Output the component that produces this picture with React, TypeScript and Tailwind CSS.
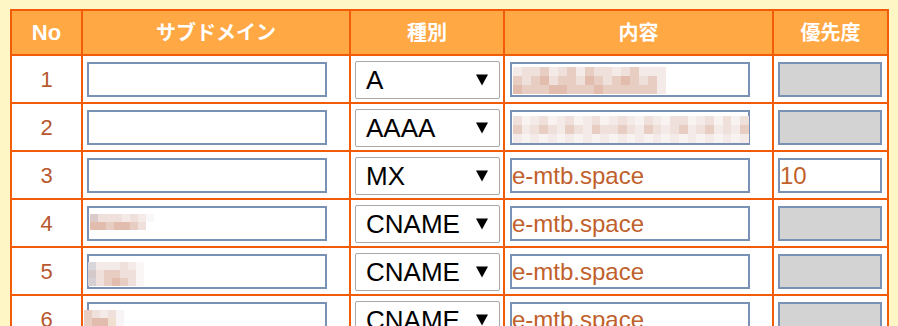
import React from "react";

const FONT = { fontFamily: '"Liberation Sans", Arial, "Noto Sans CJK JP", sans-serif' };

type Row = {
  no: number;
  sub?: string[][];
  subOffset?: number;
  type: string;
  content?: string;
  contentMosaic?: string[][];
  mosaicTop?: number;
  priority?: string;
};

const P1 = "#efe0dc";
const P2 = "#e8cdc3";
const P3 = "#e2bcad";
const P4 = "#f4ebe8";
const P5 = "#dcc9c9";
const W = "#f8f2f0";

const rows: Row[] = [
  {
    no: 1,
    type: "A",
    contentMosaic: [
      [P4, P1, P1, P2, P4, P1, P2, P4, P2, P1, P1, P4, P1, P2, P4, P4, P4],
      [P2, P1, P2, P3, P1, P2, P2, P1, P3, P2, P1, P2, P3, P2, P1, P2, P4],
      [P3, P2, P2, P2, P3, P3, P2, P2, P2, P3, P2, P2, P2, P2, P2, P2, P4],
    ],
    mosaicTop: 3,
  },
  {
    no: 2,
    type: "AAAA",
    contentMosaic: [
      [P1, W, P4, P1, W, P4, P1, W, P4, P1, W, P4, P1, P4, W, P1, P4, W, P1, P1, W, P4, P1, W, P1, W, P1],
      [P2, P4, P1, P2, P1, P4, P2, P1, P4, P2, P1, P1, P2, P1, P4, P2, P1, P4, P1, P2, P4, P1, P2, P4, P1, P4, P2],
      [P4, W, P4, W, P4, W, P4, W, P4, W, P4, W, P4, W, P4, W, P4, W, P4, W, P4, W, P4, W, P4, W, P4],
    ],
    mosaicTop: 4,
  },
  { no: 3, type: "MX", content: "e-mtb.space", priority: "10" },
  {
    no: 4,
    type: "CNAME",
    content: "e-mtb.space",
    sub: [
      [P5, P1, P1, P1, P4, P1, P4, "#faf7f8"],
      [P3, P3, P2, P3, P3, P2, P1, "#ffffff"],
    ],
    subOffset: 1,
  },
  {
    no: 5,
    type: "CNAME",
    content: "e-mtb.space",
    sub: [
      ["#d9d6db", P4, P4, P4, P1, P4, "#faf6f5"],
      ["#d4cacc", P1, P2, P2, P1, P1, "#faf6f5"],
      ["#d6cfd3", P1, P2, P3, P2, P1, "#faf6f5"],
    ],
    subOffset: -1,
  },
  {
    no: 6,
    type: "CNAME",
    content: "e-mtb.space",
    sub: [
      [P2, P1, P4, P1, "#f8f4f6"],
      [P2, P3, P3, "#f0e0d0", "#f8f4f6"],
    ],
    subOffset: -5,
  },
];

function Mosaic({ grid, size = 8 }: { grid: string[][]; size?: number }) {
  return (
    <div className="flex flex-col">
      {grid.map((r, i) => (
        <div key={i} className="flex">
          {r.map((c, j) => (
            <div key={j} style={{ width: size, height: size, background: c }} />
          ))}
        </div>
      ))}
    </div>
  );
}

function TextBox({
  width,
  value,
  disabled,
  children,
}: {
  width: string;
  value?: string;
  disabled?: boolean;
  children?: React.ReactNode;
}) {
  return (
    <div
      className={`${width} relative h-[35px] border-2 border-[#7891b4] ${
        disabled ? "bg-[#d3d3d3]" : "bg-white"
      } flex items-center`}
    >
      {value && (
        <span className="text-[24px] leading-[30px] text-[#c0612c] whitespace-nowrap">
          {value}
        </span>
      )}
      {children}
    </div>
  );
}

export default function App() {
  const headers = ["No", "サブドメイン", "種別", "内容", "優先度"];
  return (
    <div className="h-[326px] w-full overflow-hidden bg-[#fff6c6] pl-[10px] pt-[9px]" style={FONT}>
      <div className="grid w-[879px] grid-cols-[69px_266px_152px_267px_113px] gap-[2px] bg-[#f25b07] p-[2px]">
        {headers.map((h) => (
          <div
            key={h}
            className={`flex h-[43px] items-center justify-center bg-[#ffa844] font-bold text-white ${
              h === "No" ? "text-[22px]" : "text-[20px]"
            }`}
          >
            {h}
          </div>
        ))}
        {rows.map((r) => (
          <React.Fragment key={r.no}>
            <div className="flex h-[46px] items-center justify-center bg-white text-[22px] text-[#b8582e]">
              {r.no}
            </div>
            <div className="flex h-[46px] items-start bg-white pl-[4px] pt-[6px]">
              <TextBox width="w-[240px]">
                {r.sub && (
                  <div className="absolute top-[6px]" style={{ left: r.subOffset ?? 0 }}>
                    <Mosaic grid={r.sub} />
                  </div>
                )}
              </TextBox>
            </div>
            <div className="flex h-[46px] items-start bg-white pl-[4px] pt-[5px]">
              <div className="flex h-[38px] w-[145px] items-center justify-between rounded-[2px] border border-[#a9a9a9] bg-white pl-[10px] pr-[11px] text-[26px] leading-[30px] text-black">
                <span>{r.type}</span>
                <svg width="12" height="12" viewBox="0 0 12 12" className="shrink-0">
                  <polygon points="0,0.5 12,0.5 6,11.5" fill="#000" />
                </svg>
              </div>
            </div>
            <div className="flex h-[46px] items-start bg-white pl-[5px] pt-[6px]">
              <TextBox width="w-[240px]" value={r.content}>
                {r.contentMosaic && (
                  <div
                    className="absolute left-[1px] overflow-hidden"
                    style={{ width: 236, top: r.mosaicTop ?? 3 }}
                  >
                    <Mosaic grid={r.contentMosaic} size={9} />
                  </div>
                )}
              </TextBox>
            </div>
            <div className="flex h-[46px] items-start bg-white pl-[4px] pt-[6px]">
              <TextBox width="w-[104px]" value={r.priority} disabled={!r.priority} />
            </div>
          </React.Fragment>
        ))}
      </div>
    </div>
  );
}
